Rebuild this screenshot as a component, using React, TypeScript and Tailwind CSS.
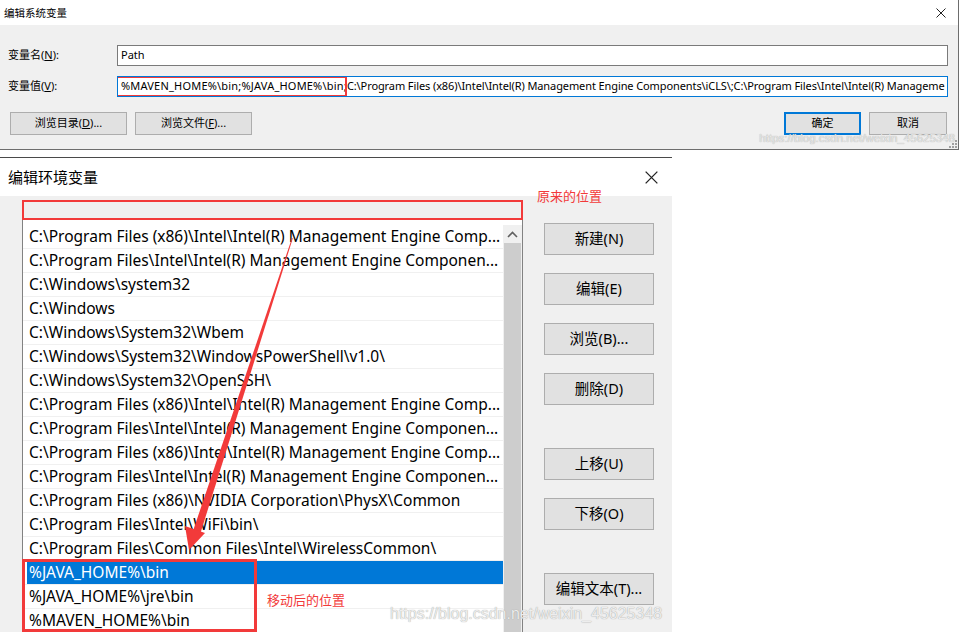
import React from "react";

const rows = [
  "C:\\Program Files (x86)\\Intel\\Intel(R) Management Engine Comp...",
  "C:\\Program Files\\Intel\\Intel(R) Management Engine Componen...",
  "C:\\Windows\\system32",
  "C:\\Windows",
  "C:\\Windows\\System32\\Wbem",
  "C:\\Windows\\System32\\WindowsPowerShell\\v1.0\\",
  "C:\\Windows\\System32\\OpenSSH\\",
  "C:\\Program Files (x86)\\Intel\\Intel(R) Management Engine Comp...",
  "C:\\Program Files\\Intel\\Intel(R) Management Engine Componen...",
  "C:\\Program Files (x86)\\Intel\\Intel(R) Management Engine Comp...",
  "C:\\Program Files\\Intel\\Intel(R) Management Engine Componen...",
  "C:\\Program Files (x86)\\NVIDIA Corporation\\PhysX\\Common",
  "C:\\Program Files\\Intel\\WiFi\\bin\\",
  "C:\\Program Files\\Common Files\\Intel\\WirelessCommon\\",
  "%JAVA_HOME%\\bin",
  "%JAVA_HOME%\\jre\\bin",
  "%MAVEN_HOME%\\bin",
];

const sideButtons = [
  { label: "新建(N)", mt: "mt-0" },
  { label: "编辑(E)", mt: "mt-[18px]" },
  { label: "浏览(B)...", mt: "mt-[18px]" },
  { label: "删除(D)", mt: "mt-[18px]" },
  { label: "上移(U)", mt: "mt-[43px]" },
  { label: "下移(O)", mt: "mt-[18px]" },
  { label: "编辑文本(T)...", mt: "mt-[43px]" },
];

const CloseX = ({ size }: { size: number }) => (
  <svg width={size} height={size} viewBox="0 0 10 10">
    <path d="M0.5 0.5 L9.5 9.5 M9.5 0.5 L0.5 9.5" stroke="#222" strokeWidth="1" fill="none" />
  </svg>
);

const SmallButton = ({ children, w, blue }: { children: React.ReactNode; w: string; blue?: boolean }) => (
  <div
    className={`${w} h-[23px] flex items-center justify-center bg-[#e1e1e1] text-[11px] text-black ${
      blue ? "border-2 border-[#0078d7]" : "border border-[#adadad]"
    }`}
  >
    {children}
  </div>
);

export default function App() {
  return (
    <div className="relative w-[964px] h-[639px] bg-white overflow-hidden font-['Noto_Sans','Noto_Sans_CJK_SC',sans-serif] text-black">
      {/* 编辑系统变量 */}
      <div className="w-[959px] h-[150px] border-r border-b border-[#6d6d6d] flex flex-col">
        <div className="h-[25px] bg-white flex items-center justify-between pl-[4px] pr-[12px]">
          <span className="text-[10.5px] font-['Noto_Sans_CJK_SC',sans-serif]">编辑系统变量</span>
          <CloseX size={10} />
        </div>
        <div className="relative flex-1 bg-[#f0f0f0] pl-[8px] pt-[20px]">
          <div className="flex items-center h-[21px]">
            <span className="w-[109px] text-[11px]">
              变量名(<span className="underline">N</span>):
            </span>
            <div className="w-[831px] h-[21px] bg-white border border-[#7a7a7a] flex items-center pl-[3px] text-[11px]">
              Path
            </div>
          </div>
          <div className="flex items-center h-[21px] mt-[10px]">
            <span className="w-[109px] text-[11px]">
              变量值(<span className="underline">V</span>):
            </span>
            <div className="relative w-[831px] h-[21px] bg-white border border-[#0078d7] flex items-center pl-[3px] text-[11px] overflow-hidden whitespace-nowrap">
              <span className="tracking-[0.2px]">%MAVEN_HOME%\bin;%JAVA_HOME%\bin;</span>
              <span className="tracking-[-0.1px]">
                C:\Program Files (x86)\Intel\Intel(R) Management Engine Components\iCLS\;C:\Program Files\Intel\Intel(R) Manageme
              </span>
              <div className="absolute left-[-2px] top-[-1px] w-[231px] h-[21px] border-2 border-[#f23a3a]" />
            </div>
          </div>
          <div className="flex items-center mt-[15px] pl-[2px] pr-[11px]">
            <SmallButton w="w-[117px]">
              浏览目录(<span className="underline">D</span>)...
            </SmallButton>
            <div className="w-[8px]" />
            <SmallButton w="w-[117px]">
              浏览文件(<span className="underline">F</span>)...
            </SmallButton>
            <div className="flex-1" />
            <SmallButton w="w-[77px]" blue>
              确定
            </SmallButton>
            <div className="w-[8px]" />
            <SmallButton w="w-[78px]">取消</SmallButton>
          </div>
          <span className="absolute right-[3px] bottom-[2px] text-[11.5px] text-[#e6e6e6] font-['Liberation_Sans',sans-serif] [text-shadow:0_0_1px_#9a9a9a]">
            https://blog.csdn.net/weixin_45625348
          </span>
          <svg className="absolute right-[1px] bottom-[1px]" width="8" height="8" viewBox="0 0 8 8">
            <g fill="#a0a0a0">
              <rect x="6" y="0" width="2" height="2" />
              <rect x="3" y="3" width="2" height="2" />
              <rect x="6" y="3" width="2" height="2" />
              <rect x="0" y="6" width="2" height="2" />
              <rect x="3" y="6" width="2" height="2" />
              <rect x="6" y="6" width="2" height="2" />
            </g>
          </svg>
        </div>
      </div>

      {/* 编辑环境变量 */}
      <div className="mt-[7px] w-[672px] h-[475px] border-t border-[#4a4a4a] flex flex-col">
        <div className="h-[38px] bg-white flex items-center justify-between pl-[8px] pr-[14px]">
          <span className="text-[15px] font-['Noto_Sans_CJK_SC',sans-serif]">编辑环境变量</span>
          <CloseX size={13} />
        </div>
        <div className="flex-1 bg-[#f0f0f0] flex pl-[22px] pt-[4px] overflow-hidden">
          <div className="w-[501px] flex flex-col">
            <div className="h-[20px] border-2 border-[#f23a3a] bg-[#f0f0f0]" />
            <div className="flex-1 flex bg-white border-l border-r border-[#828282] pt-[5px] overflow-hidden">
              <div className="flex-1 flex flex-col">
                {rows.map((r, i) => {
                  const selected = i === 14;
                  return (
                    <div key={i} className="h-[24px] shrink-0 border-b border-[#f0f0f0] flex">
                      <div
                        className={`flex-1 flex items-center whitespace-nowrap overflow-hidden text-[15.5px] ${
                          selected ? "ml-[4px] pl-[2px] bg-[#0078d7] text-white" : "pl-[6px]"
                        }`}
                      >
                        {r}
                      </div>
                    </div>
                  );
                })}
              </div>
              <div className="w-[19px] bg-[#f0f0f0] flex flex-col items-center">
                <div className="h-[18px] flex items-center justify-center">
                  <svg width="11" height="7" viewBox="0 0 11 7">
                    <polyline points="1,6 5.5,1.5 10,6" fill="none" stroke="#606060" strokeWidth="1.6" />
                  </svg>
                </div>
                <div className="w-[17px] flex-1 bg-[#cdcdcd]" />
              </div>
            </div>
          </div>
          <div className="ml-[21px] pt-[23px] flex flex-col">
            {sideButtons.map((b) => (
              <div
                key={b.label}
                className={`${b.mt} w-[110px] h-[32px] bg-[#e1e1e1] border border-[#adadad] flex items-center justify-center text-[14.5px]`}
              >
                {b.label}
              </div>
            ))}
          </div>
        </div>
      </div>

      {/* annotations */}
      <span className="absolute left-[537px] top-[186px] text-[13px] text-[#f23a3a] font-['Noto_Sans_CJK_SC',sans-serif]">
        原来的位置
      </span>
      <span className="absolute left-[267px] top-[590px] text-[13px] text-[#f23a3a] font-['Noto_Sans_CJK_SC',sans-serif]">
        移动后的位置
      </span>
      <div className="absolute left-[22px] top-[559px] w-[235px] h-[73px] border-[3px] border-[#f23a3a]" />
      <span className="absolute left-[390px] top-[602px] text-[16px] text-[#ededed] font-['Liberation_Sans',sans-serif] [text-shadow:0_0_1px_#8f8f8f]">
        https://blog.csdn.net/weixin_45625348
      </span>
      <svg className="absolute left-0 top-0 pointer-events-none" width="964" height="639" viewBox="0 0 964 639">
        <polygon points="292,238 292.8,238.3 200.5,533 193,531" fill="#f23a3a" />
        <polygon points="189,550 185,526 205,533" fill="#f23a3a" />
      </svg>
    </div>
  );
}
